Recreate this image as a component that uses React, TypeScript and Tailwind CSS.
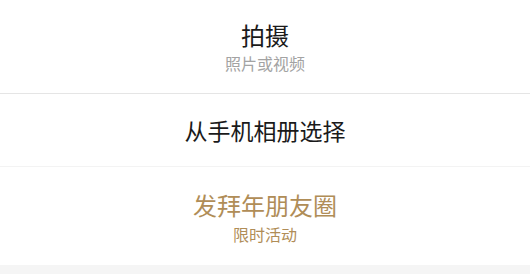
export default function App() {
  const font = { fontFamily: '"Noto Sans CJK SC", "Noto Sans", sans-serif' }
  return (
    <div className="w-[530px] h-[274px] bg-white overflow-hidden" style={font}>
      {/* Camera option */}
      <div className="flex h-[94px] flex-col items-center justify-center border-b border-[#e5e5e5] pb-px">
        <div className="text-[24px] leading-[32px] text-[#1a1a1a]">拍摄</div>
        <div className="mt-[2px] text-[16px] leading-[20px] text-[#a3a3a3]">照片或视频</div>
      </div>

      {/* Album option */}
      <div className="flex h-[73px] items-center justify-center border-b border-[#f3f3f3]">
        <div className="text-[23px] leading-[32px] text-[#1a1a1a]">从手机相册选择</div>
      </div>

      {/* Promo option */}
      <div className="flex h-[98px] flex-col items-center pt-[22px]">
        <div className="text-[24px] leading-[32px] text-[#b08d57]">发拜年朋友圈</div>
        <div className="mt-[3px] text-[16px] leading-[20px] text-[#b08d57]">限时活动</div>
      </div>

      <div className="h-[9px] bg-[#f5f5f5]" />
    </div>
  )
}
